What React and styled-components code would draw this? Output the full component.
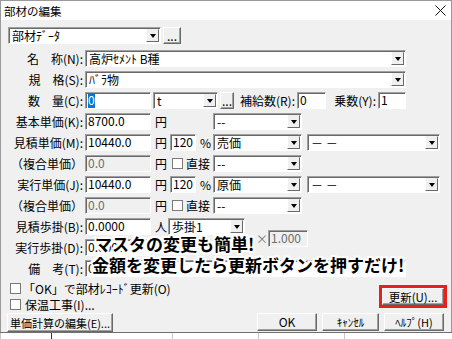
import React from 'react';
import styled, { createGlobalStyle } from 'styled-components';

const GlobalStyle = createGlobalStyle`
  html, body {
    margin: 0;
    padding: 0;
    background: #ffffff;
  }
  body {
    font-family: "Noto Sans CJK JP", "Noto Sans", sans-serif;
    font-size: 12px;
    color: #000;
  }
`;

const Window = styled.div`
  width: 452px;
  height: 339px;
  overflow: hidden;
  display: flex;
  flex-direction: column;
  background: #f0f0f0;
`;

const TitleBar = styled.div`
  height: 19px;
  flex-shrink: 0;
  background: #fff;
  border-top: 1px solid #9a9a9a;
  border-left: 1px solid #9a9a9a;
  border-right: 1px solid #9a9a9a;
  display: flex;
  align-items: center;
  justify-content: space-between;
  padding: 0 5px 0 3px;
  font-size: 11.5px;
`;

const Body = styled.div`
  position: relative;
  height: 305px;
  flex-shrink: 0;
  border-left: 1px solid #9a9a9a;
  border-right: 1px solid #9a9a9a;
  padding-top: 7px;
  display: flex;
  flex-direction: column;
`;

const TopRow = styled.div`
  display: flex;
  gap: 2px;
  margin-left: 7px;
  margin-bottom: 4px;
  height: 17px;
`;

const Row = styled.div`
  display: flex;
  align-items: center;
  height: 21px;
  flex-shrink: 0;
`;

const Label = styled.span`
  box-sizing: border-box;
  width: ${p => p.$w || 84}px;
  flex-shrink: 0;
  padding-right: 2px;
  text-align: right;
  white-space: nowrap;
  line-height: 17px;
`;

const sunken = `
  box-sizing: border-box;
  height: 17px;
  border: 1px solid;
  border-color: #a0a0a0 #ffffff #ffffff #a0a0a0;
  box-shadow: inset 1px 1px 0 #696969;
`;

const Field = styled.div`
  ${sunken}
  width: ${p => p.$w}px;
  flex-shrink: 0;
  background: ${p => (p.$disabled ? '#f0f0f0' : '#ffffff')};
  color: ${p => (p.$disabled ? '#6d6d6d' : '#000')};
  padding-left: 2px;
  line-height: 14px;
  white-space: nowrap;
  overflow: hidden;
`;

const Selected = styled.span`
  background: #0078d7;
  color: #fff;
`;

const Combo = styled.div`
  ${sunken}
  width: ${p => p.$w}px;
  flex-shrink: 0;
  margin-left: ${p => p.$ml || 0}px;
  background: #fff;
  display: flex;
  align-items: center;
  justify-content: space-between;
  padding: 1px 1px 1px 3px;
  white-space: nowrap;
`;

const ArrowButton = styled.span`
  box-sizing: border-box;
  width: 13px;
  height: 13px;
  flex-shrink: 0;
  background: #f0f0f0;
  border: 1px solid;
  border-color: #f0f0f0 #696969 #696969 #ffffff;
  display: flex;
  align-items: center;
  justify-content: center;

  &::after {
    content: '';
    border-left: 3px solid transparent;
    border-right: 3px solid transparent;
    border-top: 4px solid #000;
  }
`;

const Button = styled.button`
  box-sizing: border-box;
  width: ${p => p.$w}px;
  height: ${p => p.$h || 18}px;
  margin-left: ${p => p.$ml || 0}px;
  margin-top: ${p => p.$mt || 0}px;
  flex-shrink: 0;
  padding: 0;
  background: #f0f0f0;
  border: 1px solid;
  border-color: #ffffff #696969 #696969 #ffffff;
  box-shadow: inset -1px -1px 0 #a0a0a0;
  font-family: inherit;
  font-size: ${p => p.$fs || 12}px;
  color: #000;
  line-height: 14px;
  white-space: nowrap;
`;

const Unit = styled.span`
  width: ${p => p.$w}px;
  flex-shrink: 0;
  padding-left: ${p => p.$pl ?? 4}px;
  box-sizing: border-box;
  color: ${p => (p.$muted ? '#7a7a7a' : '#000')};
  white-space: nowrap;
`;

const Check = styled.span`
  box-sizing: border-box;
  width: 11px;
  height: 11px;
  flex-shrink: 0;
  background: #fff;
  border: 1px solid #7a7a7a;
`;

const CheckCell = styled.span`
  width: 43px;
  flex-shrink: 0;
  display: flex;
  align-items: center;
  gap: 3px;
  padding-left: 2px;
  box-sizing: border-box;
`;

const Multiplier = styled.span`
  display: flex;
  align-items: center;
  align-self: flex-start;
  margin-top: -7px;
`;

const BottomArea = styled.div`
  display: flex;
  justify-content: space-between;
  margin-top: 1px;
`;

const LeftColumn = styled.div`
  display: flex;
  flex-direction: column;
  padding-left: 6px;
`;

const CheckRow = styled.div`
  display: flex;
  align-items: center;
  gap: ${p => p.$gap || 2}px;
  height: 16px;
  padding-left: 3px;
`;

const RightColumn = styled.div`
  display: flex;
  flex-direction: column;
  align-items: flex-end;
  padding-right: 7px;
  padding-top: 8px;
`;

const Highlight = styled.span`
  display: inline-flex;
  outline: 3px solid #e8201a;
  margin-bottom: 8px;
`;

const ButtonRow = styled.div`
  display: flex;
  gap: 5px;
`;

const Callout = styled.div`
  position: absolute;
  left: 91px;
  top: 213px;
  font-family: "Noto Sans CJK JP", sans-serif;
  font-weight: 700;
  font-size: 17px;
  line-height: 21px;
  color: #000;
  white-space: nowrap;
  text-shadow:
    2px 0 0 #fff, -2px 0 0 #fff, 0 2px 0 #fff, 0 -2px 0 #fff,
    2px 2px 0 #fff, -2px -2px 0 #fff, 2px -2px 0 #fff, -2px 2px 0 #fff;
`;

const CalloutLine = styled.div`
  margin-left: ${p => p.$indent || 0}px;
`;

const Backdrop = styled.div`
  flex: 1;
  background: #fff;
  border-top: 1px solid #6f6f6f;
  display: flex;
`;

const BackdropCell = styled.span`
  width: ${p => p.$w}px;
  flex-shrink: 0;
  border-left: 1px solid ${p => (p.$dark ? '#333' : '#c8c8c8')};
`;

const CloseIcon = () => (
  <svg width="11" height="11" viewBox="0 0 11 11">
    <path d="M0.5 0.5 L10.5 10.5 M10.5 0.5 L0.5 10.5" stroke="#111" strokeWidth="1" />
  </svg>
);

const ComboBox = ({ w, ml, children }) => (
  <Combo $w={w} $ml={ml}>
    <span>{children}</span>
    <ArrowButton />
  </Combo>
);

const PriceRow = ({ label, value, pct, kind, detail }) => (
  <Row>
    <Label>{label}</Label>
    <Field $w={66}>{value}</Field>
    <Unit $w={19}>円</Unit>
    <Field $w={26}>{pct}</Field>
    <Unit $w={17}>%</Unit>
    <ComboBox w={89}>{kind}</ComboBox>
    <ComboBox w={133} ml={5}>{detail}</ComboBox>
  </Row>
);

const CompositeRow = () => (
  <Row>
    <Label>（複合単価）</Label>
    <Field $w={66} $disabled>0.0</Field>
    <Unit $w={19}>円</Unit>
    <CheckCell>
      <Check />
      <span>直接</span>
    </CheckCell>
    <ComboBox w={89}>--</ComboBox>
  </Row>
);

export default function App() {
  return (
    <>
      <GlobalStyle />
      <Window>
        <TitleBar>
          <span>部材の編集</span>
          <CloseIcon />
        </TitleBar>
        <Body>
          <TopRow>
            <ComboBox w={153}>部材ﾃﾞｰﾀ</ComboBox>
            <Button $w={18} $h={17}>...</Button>
          </TopRow>

          <Row>
            <Label>名　称(N):</Label>
            <ComboBox w={321}>高炉ｾﾒﾝﾄ B種</ComboBox>
          </Row>
          <Row>
            <Label>規　格(S):</Label>
            <ComboBox w={321}>ﾊﾞﾗ物</ComboBox>
          </Row>
          <Row>
            <Label>数　量(C):</Label>
            <Field $w={66}><Selected>0</Selected></Field>
            <ComboBox w={65} ml={2}>t</ComboBox>
            <Button $w={14} $h={17} $ml={2}>...</Button>
            <Label $w={63}>補給数(R):</Label>
            <Field $w={29}>0</Field>
            <Label $w={52}>乗数(Y):</Label>
            <Field $w={28}>1</Field>
          </Row>
          <Row>
            <Label>基本単価(K):</Label>
            <Field $w={66}>8700.0</Field>
            <Unit $w={62}>円</Unit>
            <ComboBox w={89}>--</ComboBox>
          </Row>
          <PriceRow label="見積単価(M):" value="10440.0" pct="120" kind="売価" detail="－ －" />
          <CompositeRow />
          <PriceRow label="実行単価(J):" value="10440.0" pct="120" kind="原価" detail="－ －" />
          <CompositeRow />
          <Row>
            <Label>見積歩掛(B):</Label>
            <Field $w={66}>0.0000</Field>
            <Unit $w={17}>人</Unit>
            <ComboBox w={77}>歩掛1</ComboBox>
          </Row>
          <Row>
            <Label>実行歩掛(D):</Label>
            <Field $w={66}>0.0000</Field>
            <Unit $w={104} $pl={0} />
            <Multiplier>
              <Unit $w={13} $pl={1} $muted>×</Unit>
              <Field $w={40} $disabled>1.000</Field>
            </Multiplier>
          </Row>
          <Row>
            <Label>備　考(T):</Label>
            <Field $w={321}>0</Field>
          </Row>

          <BottomArea>
            <LeftColumn>
              <CheckRow>
                <Check />
                <span>「OK」で部材ﾚｺｰﾄﾞ更新(O)</span>
              </CheckRow>
              <CheckRow $gap={4}>
                <Check />
                <span>保温工事(I)...</span>
              </CheckRow>
              <Button $w={106} $h={19} $mt={1} $fs={11}>単価計算の編集(E)...</Button>
            </LeftColumn>
            <RightColumn>
              <Highlight>
                <Button $w={62} $h={17} $fs={11.5}>更新(U)...</Button>
              </Highlight>
              <ButtonRow>
                <Button $w={60}>OK</Button>
                <Button $w={57} $fs={11}>ｷｬﾝｾﾙ</Button>
                <Button $w={60} $fs={11}>ﾍﾙﾌﾟ(H)</Button>
              </ButtonRow>
            </RightColumn>
          </BottomArea>

          <Callout>
            <CalloutLine $indent={3}>マスタの変更も簡単!</CalloutLine>
            <CalloutLine>金額を変更したら更新ボタンを押すだけ!</CalloutLine>
          </Callout>
        </Body>
        <Backdrop>
          <BackdropCell $w={50} />
          <BackdropCell $w={120} $dark />
          <BackdropCell $w={85} />
          <BackdropCell $w={85} />
          <BackdropCell $w={83} />
        </Backdrop>
      </Window>
    </>
  );
}
